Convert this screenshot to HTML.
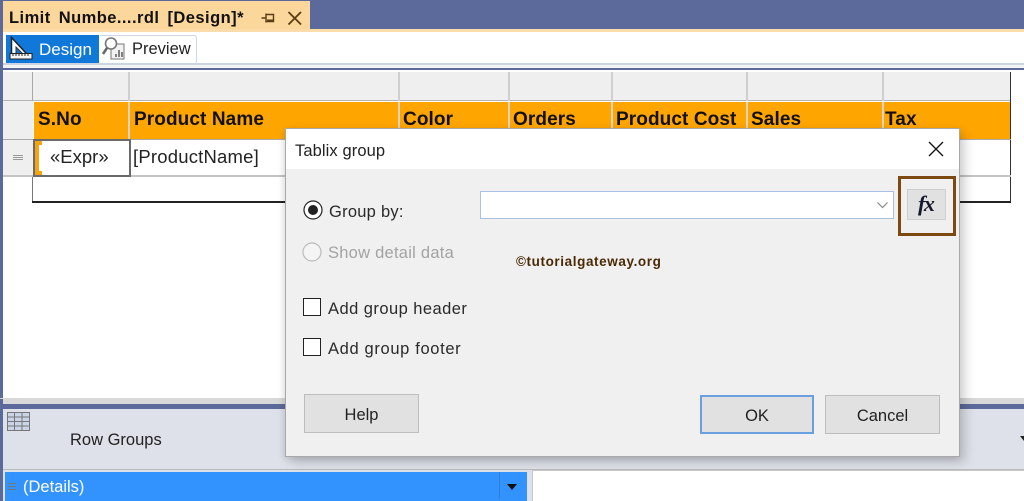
<!DOCTYPE html>
<html><head><meta charset="utf-8"><style>
html,body{margin:0;padding:0;background:#fff}
#p{position:relative;width:1024px;height:501px;overflow:hidden;background:#fff;font-family:"Liberation Sans",sans-serif;color:#222;filter:blur(.3px)}
#p div{position:absolute;box-sizing:border-box}
.t{white-space:nowrap;line-height:20px}
.h{font-weight:bold;font-size:19px;color:#111;top:110px;letter-spacing:.1px}
.v{background:#cfcfcf;width:2px;top:72px;height:29px}
.l{font-size:16.5px;letter-spacing:.25px;color:#2a2a2a}
.b{background:#e1e1e1;border:1px solid #bdbdbd;font-size:16.5px;text-align:center;line-height:40px;color:#222}
.c{width:18px;height:18px;left:303px;border:1px solid #222;background:#fff}
</style></head><body><div id="p">

<div style="left:0;top:0;width:1024px;height:30px;background:#5c6a9b"></div>
<div style="left:0;top:0;width:3px;height:401px;background:#5c6a9b"></div>
<div style="left:3px;top:1px;width:307px;height:31px;background:#fcd79c"></div>
<div style="left:3px;top:29px;width:1021px;height:3px;background:#fcdca8"></div>
<div class="t" style="left:9px;top:8px;font-size:16.5px;font-weight:bold;color:#111;letter-spacing:.45px;word-spacing:3px">Limit Numbe....rdl [Design]*</div>
<svg style="position:absolute;left:260px;top:9px" width="44" height="18" viewBox="0 0 44 18" fill="none" stroke="#5a3c14"><path d="M1.500 9H6M6 4.500V13.500M6 5.500H13.500V12.500H6" stroke-width="1.400"/><path d="M7 11.500H13" stroke-width="2"/><path d="M28.500 3L41 15.500M41 3L28.500 15.500" stroke-width="1.800"/></svg>

<div style="left:3px;top:32px;width:1021px;height:32px;background:#fff"></div>
<div style="left:6px;top:35px;width:93px;height:28px;background:#0f78d8"></div>
<svg style="position:absolute;left:9px;top:36px" width="24" height="24" viewBox="0 0 24 24" fill="none"><path d="M2.500 1.500V22.500H22L2.500 1.500Z" fill="#fff" stroke="#222" stroke-width="1.500"/><path d="M7 11V18H14L7 11Z" fill="#0f78d8" stroke="#333"/><rect x="1" y="17.500" width="22" height="5.500" fill="#f5f5f5" stroke="#222"/><path d="M4 18V20M7 18V20M10 18V20M13 18V20M16 18V20M19 18V20" stroke="#222"/></svg>
<div class="t" style="left:39px;top:40px;font-size:17px;color:#fff">Design</div>
<div style="left:100px;top:35px;width:97px;height:29px;background:#fff;border:1px solid #cdd6e6;border-bottom:0;border-left:0;border-radius:0 3px 0 0"></div>
<svg style="position:absolute;left:101px;top:36px" width="24" height="24" viewBox="0 0 24 24" fill="none"><rect x="10" y="8" width="13" height="15" fill="#f2f2f2" stroke="#777"/><path d="M15 21V18M18 21V14M21 21V16" stroke="#444" stroke-width="1.300"/><circle cx="10" cy="7.500" r="5.500" fill="#fff" stroke="#777" stroke-width="1.600"/><path d="M6 12L2 18" stroke="#666" stroke-width="2.500"/></svg>
<div class="t" style="left:132px;top:39px;font-size:16.5px;color:#222">Preview</div>
<div style="left:3px;top:63px;width:1021px;height:2px;background:#ccd4e4"></div>
<div style="left:197px;top:63px;width:827px;height:1px;background:#ccd4e4"></div>
<div style="left:3px;top:65px;width:1021px;height:3px;background:#f3f3f3"></div>
<div style="left:3px;top:68px;width:1021px;height:2px;background:#5c6a9b"></div>

<div style="left:3px;top:72px;width:1008px;height:29px;background:#efefef"></div>
<div style="left:3px;top:100px;width:1008px;height:1px;background:#b5b5b5"></div>
<div style="left:3px;top:101px;width:30px;height:76px;background:#efefef"></div>
<div class="v" style="left:32px;background:#a8a8a8;width:1px"></div>
<div class="v" style="left:128px"></div>
<div class="v" style="left:398px"></div>
<div class="v" style="left:508px"></div>
<div class="v" style="left:611px"></div>
<div class="v" style="left:746px"></div>
<div class="v" style="left:882px"></div>
<div style="left:1010px;top:72px;width:1px;height:131px;background:#333"></div>
<div style="left:34px;top:102px;width:976px;height:37px;background:#ffa500"></div>
<div style="left:128px;top:102px;width:2px;height:37px;background:#d9d4c5"></div>
<div style="left:398px;top:102px;width:2px;height:37px;background:#d9d4c5"></div>
<div style="left:508px;top:102px;width:2px;height:37px;background:#d9d4c5"></div>
<div style="left:611px;top:102px;width:2px;height:37px;background:#d9d4c5"></div>
<div style="left:746px;top:102px;width:2px;height:37px;background:#d9d4c5"></div>
<div style="left:882px;top:102px;width:2px;height:37px;background:#d9d4c5"></div>
<div class="t h" style="left:38px">S.No</div>
<div class="t h" style="left:134px">Product Name</div>
<div class="t h" style="left:403px">Color</div>
<div class="t h" style="left:513px">Orders</div>
<div class="t h" style="left:616px">Product Cost</div>
<div class="t h" style="left:751px">Sales</div>
<div class="t h" style="left:885px">Tax</div>
<div style="left:3px;top:139px;width:1008px;height:1px;background:#aaa"></div>
<div style="left:3px;top:175px;width:1008px;height:2px;background:#c4c4c4"></div>
<div style="left:13px;top:155px;width:10px;height:1px;background:#999;box-shadow:0 2px 0 #999,0 4px 0 #999"></div>
<div style="left:33px;top:139px;width:98px;height:38px;border:2px solid #6a6a6a;background:#fff"></div>
<div style="left:35px;top:141px;width:7px;height:34px;background:#f5a30f"></div>
<div style="left:39px;top:145px;width:3px;height:26px;background:#fff"></div>
<div class="t" style="left:50px;top:147px;font-size:18.5px;color:#222">«Expr»</div>
<div class="t" style="left:133px;top:147px;font-size:18.5px;color:#222;letter-spacing:.2px">[ProductName]</div>
<div style="left:32px;top:177px;width:1px;height:26px;background:#777"></div>
<div style="left:32px;top:201px;width:979px;height:2px;background:#222"></div>

<div style="left:0;top:398px;width:1024px;height:6px;background:#d8d8d8"></div>
<div style="left:0;top:399px;width:3px;height:102px;background:#5c6a9b"></div>
<div style="left:0;top:404px;width:1024px;height:5px;background:#5c6a9b"></div>
<div style="left:3px;top:409px;width:1021px;height:60px;background:#dee1e9"></div>
<div style="left:3px;top:469px;width:1021px;height:1px;background:#bbb"></div>
<svg style="position:absolute;left:7px;top:412px" width="23" height="19" viewBox="0 0 23 19"><rect x=".5" y=".5" width="22" height="18" fill="#c9d4e6" stroke="#777"/><path d="M0 5H23M0 9.500H23M0 14H23M7.500 0V19M15 0V19" stroke="#777"/></svg>
<div class="t" style="left:70px;top:430px;font-size:16.5px;color:#222">Row Groups</div>
<div style="left:1020px;top:436px;width:0;height:0;border:4px solid transparent;border-top:5px solid #222;border-bottom:0"></div>
<div style="left:3px;top:470px;width:1021px;height:31px;background:#dee1e9"></div>
<div style="left:5px;top:472px;width:522px;height:29px;background:#3393fe"></div>
<div style="left:499px;top:472px;width:1px;height:27px;background:#2f7fd8"></div>
<div style="left:507px;top:484px;width:0;height:0;border:5px solid transparent;border-top:6px solid #111;border-bottom:0;border-left-width:5px"></div>
<div style="left:8px;top:483px;width:8px;height:1px;background:#777;box-shadow:0 3px 0 #777,0 6px 0 #777"></div>
<div class="t" style="left:23px;top:477px;font-size:16.5px;color:#fff">(Details)</div>
<div style="left:532px;top:470px;width:492px;height:31px;background:#fff;border:1px solid #c8c8c8;border-right:0;border-bottom:0"></div>

<div style="left:285px;top:128px;width:675px;height:329px;background:#f0f0f0;border:1px solid #a8a8a8;box-shadow:5px 5px 10px rgba(0,0,0,.18),-2px 2px 6px rgba(0,0,0,.1)"></div>
<div style="left:286px;top:129px;width:673px;height:40px;background:#fff"></div>
<div class="t" style="left:295px;top:141px;font-size:16.5px;color:#222;letter-spacing:.1px">Tablix group</div>
<svg style="position:absolute;left:928px;top:141px" width="16" height="16" viewBox="0 0 16 16"><path d="M1 1L15 15M15 1L1 15" stroke="#111" stroke-width="1.300"/></svg>

<svg style="position:absolute;left:302px;top:199px" width="22" height="64" viewBox="0 0 22 64" fill="none"><circle cx="11" cy="11" r="9" fill="#fff" stroke="#222" stroke-width="1.200"/><circle cx="11" cy="11" r="5" fill="#222"/><circle cx="10" cy="53" r="9" fill="#f4f4f4" stroke="#bbb" stroke-width="1.200"/></svg>
<div class="t l" style="left:329px;top:202px">Group by:</div>
<div class="t l" style="left:328px;top:243px;color:#a3a3a3">Show detail data</div>
<div class="c" style="top:298px"></div>
<div class="t l" style="left:328px;top:299px;letter-spacing:.45px">Add group header</div>
<div class="c" style="top:338px"></div>
<div class="t l" style="left:328px;top:339px;letter-spacing:.65px">Add group footer</div>
<div style="left:480px;top:191px;width:414px;height:28px;background:#fff;border:1px solid #a9c0e4"></div>
<svg style="position:absolute;left:876px;top:201px" width="13" height="9" viewBox="0 0 13 9"><path d="M1.500 1.500L6.500 6.500L11.500 1.500" stroke="#888" fill="none" stroke-width="1.200"/></svg>
<div class="t" style="left:516px;top:252px;font-size:13.500px;font-weight:bold;color:#4a2a06;letter-spacing:.6px">©tutorialgateway.org</div>
<div style="left:898px;top:176px;width:58px;height:60px;border:3px solid #7c4a10"></div>
<div style="left:907px;top:189px;width:39px;height:31px;background:#e1e1e1;border:1px solid #cfcfcf"></div>
<div class="t" style="left:918px;top:194px;font-family:'Liberation Serif',serif;font-weight:bold;font-style:italic;font-size:22px;color:#16182c;letter-spacing:-1.500px">fx</div>

<div class="b" style="left:304px;top:394px;width:115px;height:39px">Help</div>
<div class="b" style="left:700px;top:395px;width:114px;height:39px;border:2px solid #6a9fe0;line-height:39px">OK</div>
<div class="b" style="left:825px;top:395px;width:115px;height:39px">Cancel</div>
</div></body></html>
